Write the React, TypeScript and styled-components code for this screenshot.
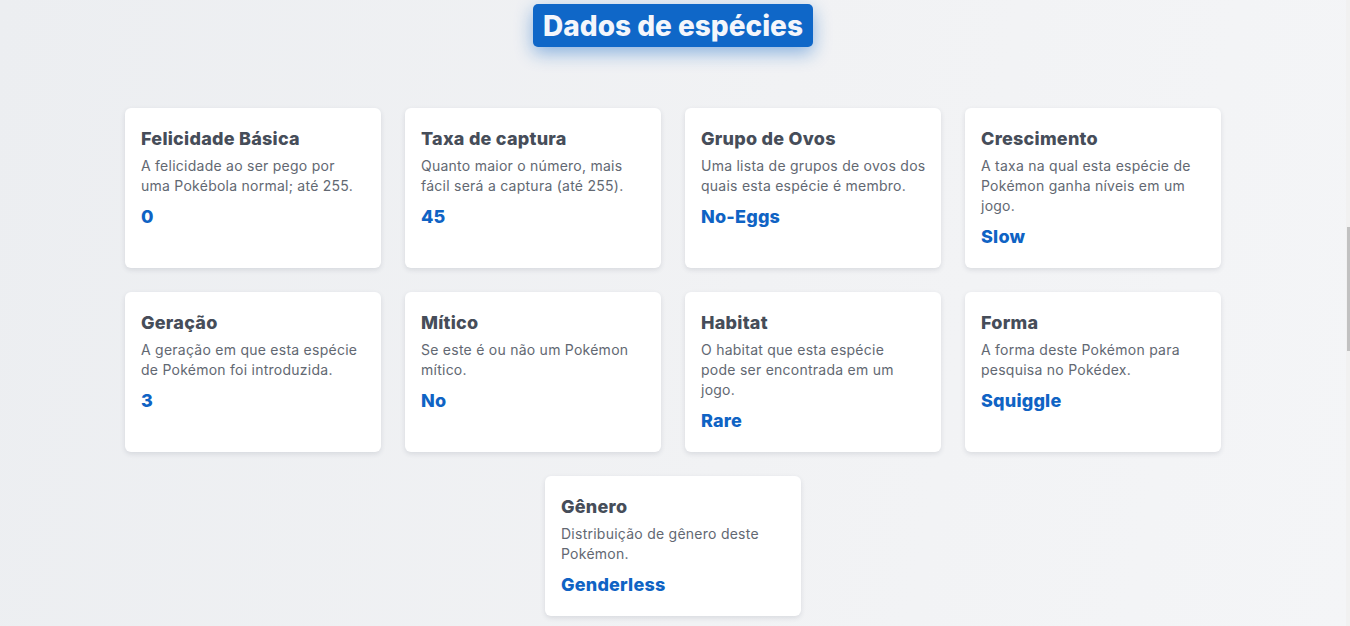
import React from "react";
import styled, { createGlobalStyle } from "styled-components";

const Global = createGlobalStyle`
  html, body { margin: 0; padding: 0; height: 100%; overflow: hidden; }
  body {
    font-family: "Inter", "Noto Sans", sans-serif;
    background: linear-gradient(100deg, #eceef1 0%, #f1f2f4 55%, #f4f5f7 100%);
  }
`;

const Page = styled.main`
  width: 1346px;
  min-height: 626px;
  display: flex;
  flex-direction: column;
  align-items: center;
  padding-top: 4px;
  box-sizing: border-box;
`;

const Heading = styled.h2`
  margin: 0;
  height: 43px;
  padding: 0 10px;
  display: flex;
  align-items: center;
  background: #0f67c8;
  color: #f4f6fb;
  font-size: 28px;
  font-weight: 800;
  letter-spacing: 0;
  border-radius: 5px;
  box-shadow: 0 6px 18px rgba(15, 103, 200, 0.45);
`;

const Grid = styled.section`
  margin-top: 61px;
  width: 1096px;
  display: flex;
  flex-wrap: wrap;
  justify-content: center;
  gap: 24px;
`;

const Card = styled.article`
  width: 256px;
  box-sizing: border-box;
  padding: 19px 16px 19px;
  background: #ffffff;
  border-radius: 6px;
  box-shadow: 0 2px 5px rgba(40, 50, 70, 0.12);
  display: flex;
  flex-direction: column;
`;

const Title = styled.h3`
  margin: 0 0 5px;
  font-size: 18px;
  line-height: 24px;
  font-weight: 800;
  letter-spacing: 0.25px;
  color: #464d59;
`;

const Desc = styled.p`
  margin: 0 0 9px;
  font-size: 14px;
  line-height: 20px;
  letter-spacing: 0.25px;
  white-space: nowrap;
  color: #626872;
`;

const Value = styled.span`
  font-size: 18px;
  line-height: 24px;
  font-weight: 800;
  letter-spacing: 0.2px;
  color: #0f63c4;
`;

const ScrollTrack = styled.div`
  position: fixed;
  top: 0;
  right: 0;
  width: 4px;
  height: 100%;
  background: #f1f1f1;
`;

const ScrollThumb = styled.div`
  position: absolute;
  top: 227px;
  left: 1px;
  width: 3px;
  height: 124px;
  background: #c1c1c1;
`;

const data = [
  { t: "Felicidade Básica", d: ["A felicidade ao ser pego por", "uma Pokébola normal; até 255."], v: "0" },
  { t: "Taxa de captura", d: ["Quanto maior o número, mais", "fácil será a captura (até 255)."], v: "45" },
  { t: "Grupo de Ovos", d: ["Uma lista de grupos de ovos dos", "quais esta espécie é membro."], v: "No-Eggs" },
  { t: "Crescimento", d: ["A taxa na qual esta espécie de", "Pokémon ganha níveis em um", "jogo."], v: "Slow" },
  { t: "Geração", d: ["A geração em que esta espécie", "de Pokémon foi introduzida."], v: "3" },
  { t: "Mítico", d: ["Se este é ou não um Pokémon", "mítico."], v: "No" },
  { t: "Habitat", d: ["O habitat que esta espécie", "pode ser encontrada em um", "jogo."], v: "Rare" },
  { t: "Forma", d: ["A forma deste Pokémon para", "pesquisa no Pokédex."], v: "Squiggle" },
  { t: "Gênero", d: ["Distribuição de gênero deste", "Pokémon."], v: "Genderless" },
];

export default function App() {
  return (
    <>
      <Global />
      <Page>
        <Heading>Dados de espécies</Heading>
        <Grid>
          {data.map((c) => (
            <Card key={c.t}>
              <Title>{c.t}</Title>
              <Desc>
                {c.d.map((line, i) => (
                  <React.Fragment key={i}>
                    {i > 0 && <br />}
                    {line}
                  </React.Fragment>
                ))}
              </Desc>
              <Value>{c.v}</Value>
            </Card>
          ))}
        </Grid>
      </Page>
      <ScrollTrack>
        <ScrollThumb />
      </ScrollTrack>
    </>
  );
}
